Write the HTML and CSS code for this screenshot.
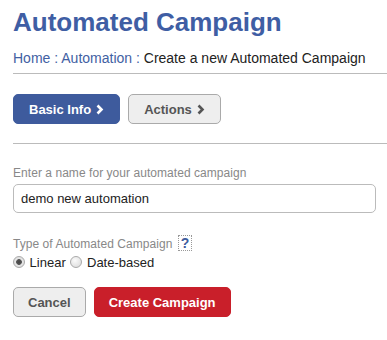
FILE: index.html
```html
<!DOCTYPE html>
<html lang="en">

<head>
  <meta charset="UTF-8" />
  <meta name="viewport" content="width=device-width, initial-scale=1.0" />
  <title>Automated Campaign</title>
  <link rel="stylesheet" href="styles.css">
</head>

<body>
  <div class="page">
    <h1 class="title">Automated Campaign</h1>

    <div class="breadcrumb">
      <a href="#">Home</a> : <a href="#">Automation</a> : <span class="current">Create a new Automated Campaign</span>
    </div>

    <div class="steps">
      <button class="step active">Basic Info
        <svg class="chev" width="8" height="11" viewBox="0 0 8 11"><path d="M1.5 1.5 L5.5 5.5 L1.5 9.5" fill="none" stroke="currentColor" stroke-width="2.6"/></svg>
      </button>
      <button class="step">Actions
        <svg class="chev" width="8" height="11" viewBox="0 0 8 11"><path d="M1.5 1.5 L5.5 5.5 L1.5 9.5" fill="none" stroke="currentColor" stroke-width="2.6"/></svg>
      </button>
    </div>

    <form class="form">
      <label class="label" for="name">Enter a name for your automated campaign</label>
      <input class="input" id="name" type="text" value="demo new automation">

      <div class="label type-label">
        Type of Automated Campaign <span class="help">?</span>
      </div>
      <div class="radios">
        <label><input type="radio" name="type" checked> Linear</label>
        <label><input type="radio" name="type"> Date-based</label>
      </div>

      <div class="actions">
        <button type="button" class="btn cancel">Cancel</button>
        <button type="button" class="btn create">Create Campaign</button>
      </div>
    </form>
  </div>
</body>

</html>
```

FILE: styles.css
```css
body {
  font-family: "Liberation Sans", Arial, sans-serif;
  margin: 0;
  background-color: #fff;
  color: #222;
}

.page {
  padding: 0 0 0 13px;
}

.title {
  margin: 0;
  padding-top: 7px;
  font-size: 26px;
  line-height: 30px;
  font-weight: bold;
  color: #3f5ea4;
}

.breadcrumb {
  margin-top: 13px;
  padding-bottom: 6px;
  font-size: 14px;
  line-height: 17px;
  color: #4261a3;
  border-bottom: 1px solid #bbb;
}

.breadcrumb a {
  color: #4261a3;
  text-decoration: none;
}

.breadcrumb .current {
  color: #222;
}

.steps {
  display: flex;
  gap: 8px;
  padding: 20px 0 19px;
  border-bottom: 1px solid #bbb;
}

.step {
  display: flex;
  align-items: center;
  gap: 5px;
  font-family: inherit;
  font-size: 13px;
  font-weight: bold;
  height: 30px;
  padding: 0 15px;
  border-radius: 5px;
  border: 1px solid #aaa;
  background-color: #eee;
  color: #555;
}

.step.active {
  background-color: #3e5b9d;
  border-color: #3e5b9d;
  color: #fff;
}

.form {
  padding-right: 11px;
}

.label {
  display: block;
  margin-top: 22px;
  font-size: 12px;
  line-height: 14px;
  letter-spacing: 0.05px;
  color: #888;
}

.input {
  display: block;
  box-sizing: border-box;
  width: 100%;
  height: 29px;
  margin-top: 4px;
  padding: 0 7px;
  font-family: inherit;
  font-size: 13px;
  color: #222;
  border: 1px solid #bbb;
  border-radius: 5px;
}

.type-label {
  margin-top: 22px;
}

.help {
  display: inline-block;
  margin-left: 2px;
  padding: 0 2px;
  font-weight: bold;
  font-size: 14px;
  line-height: 14px;
  color: #3e5b9d;
  border: 1px dotted #999;
}

.radios {
  margin-top: 4px;
  font-size: 13px;
  line-height: 16px;
  color: #222;
}

.radios label {
  margin-right: 1px;
}

.radios input {
  appearance: none;
  -webkit-appearance: none;
  box-sizing: border-box;
  margin: 0 1px 0 0;
  width: 12px;
  height: 12px;
  border: 1px solid #aaa;
  border-radius: 50%;
  background: radial-gradient(circle at 40% 35%, #fafafa, #d8d8d8);
  vertical-align: -1px;
}

.radios input:checked {
  background: radial-gradient(circle, #444 0, #555 2.5px, #e6e6e6 3.2px, #d8d8d8 100%);
}

.actions {
  display: flex;
  gap: 8px;
  margin-top: 16px;
}

.btn {
  font-family: inherit;
  font-size: 13px;
  font-weight: bold;
  height: 30px;
  padding: 0 14px;
  border-radius: 5px;
  cursor: pointer;
}

.cancel {
  background-color: #eee;
  border: 1px solid #aaa;
  color: #555;
}

.create {
  background-color: #c91f2a;
  border: 1px solid #c91f2a;
  color: #fff;
}
```
